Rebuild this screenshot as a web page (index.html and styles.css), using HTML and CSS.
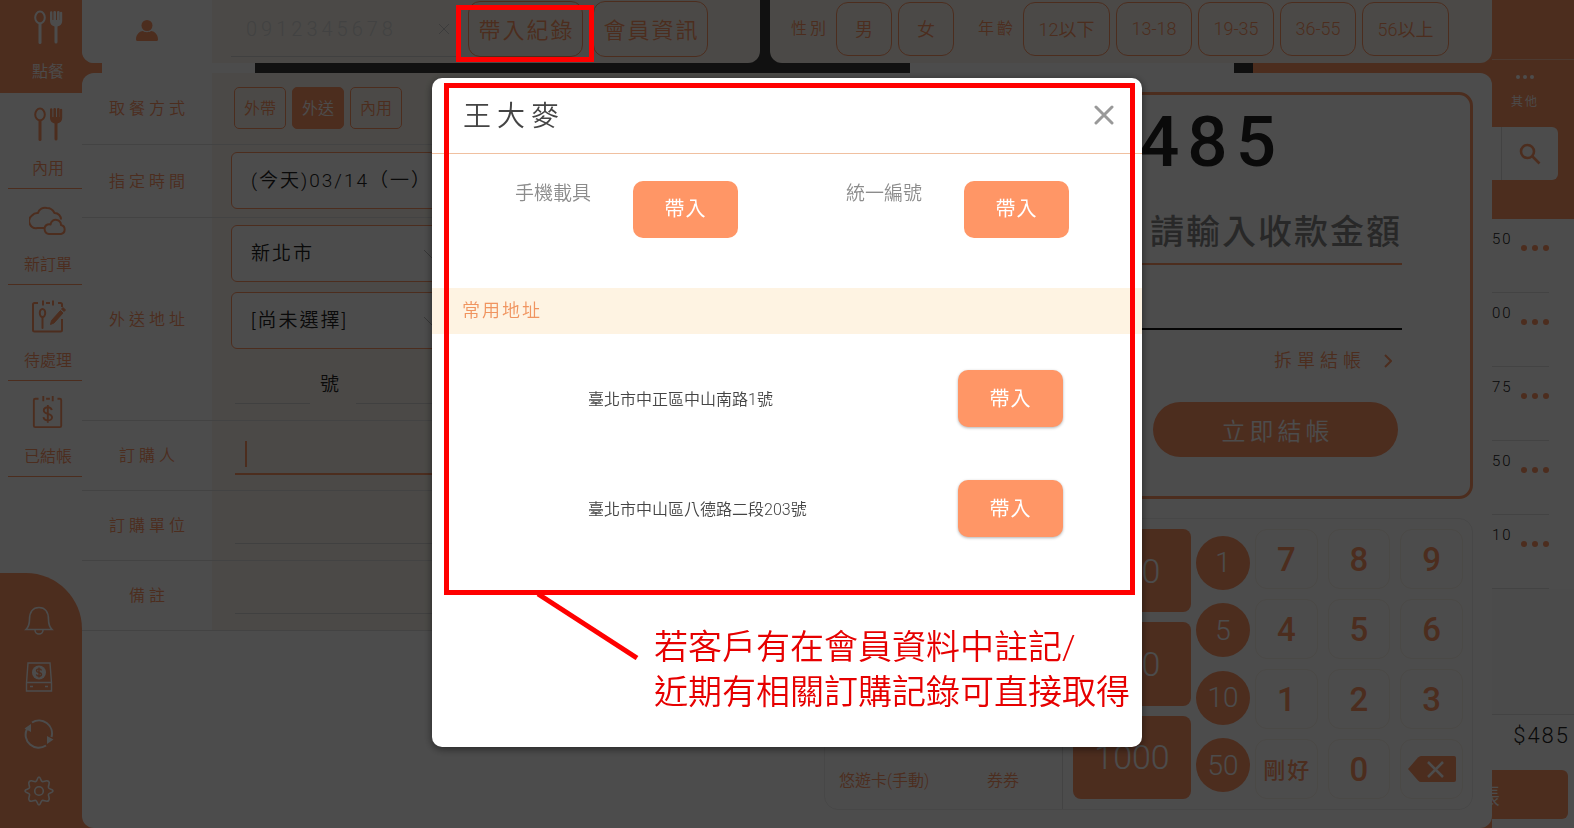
FILE: index.html
```html
<!DOCTYPE html>
<html lang="zh-Hant">
<head>
<meta charset="utf-8">
<meta name="viewport" content="width=device-width, initial-scale=1">
<title>點餐 - 會員紀錄</title>
<link rel="stylesheet" href="styles.css">
</head>
<body>
<svg class="defs" aria-hidden="true">
  <symbol id="cutlery" viewBox="0 0 30 34">
    <ellipse cx="7" cy="7.500" rx="4.800" ry="6" fill="none" stroke="currentColor" stroke-width="2"/>
    <path d="M7 14v18.500" stroke="currentColor" stroke-width="3" stroke-linecap="round"/>
    <path d="M17 2.500a1.200 1.200 0 0 1 2.400 0V10h1V2a1.200 1.200 0 0 1 1.300-1 1.200 1.200 0 0 1 1.300 1v8h1V2a1.200 1.200 0 0 1 1.300-1 1.200 1.200 0 0 1 1.300 1v8h.300V2.500a1.200 1.200 0 0 1 2.300 0V11c0 3-2 5-4.700 5.500V32a1.500 1.500 0 0 1-3 0V16.500C19 16 17 14 17 11z" fill="currentColor"/>
  </symbol>
</svg>
<div class="app">
  <nav class="side">
    <a class="side-item active" href="#order"><svg class="i-cut"><use href="#cutlery"/></svg><span>點餐</span></a>
    <a class="side-item" href="#dine"><svg class="i-cut"><use href="#cutlery"/></svg><span>內用</span></a>
    <a class="side-item" href="#new"><svg class="i-big" viewBox="0 0 38 34" fill="none" stroke="currentColor" stroke-width="2" stroke-linejoin="round"><path d="M16 25H8.500A7 7 0 0 1 3 12.500 7 7 0 0 1 9 10C10 6 14 4 18 5c3 0 6 2 7.500 5 4 0 6.500 3 6.500 6.500"/><path d="M20 31a5 5 0 0 1-1.500-9.500c1.500-.500 2-.500 3 0C22 18 25 16 28 17c2.500.700 4 2.500 4 5a4.600 4.600 0 0 1 0 9z"/></svg><span>新訂單</span></a>
    <a class="side-item" href="#pending"><svg class="i-big" viewBox="0 0 38 34" fill="none" stroke="currentColor" stroke-width="2"><path d="M4 31q0 1.500 1.500 1.500h26Q33 32.500 33 31V20M9 4H5.500Q4 4 4 5.500V31M17 4h4M29 4h2.500Q33 4 33 5.500V8M14 1.500v5M24 1.500v5"/><ellipse cx="13.500" cy="14" rx="2.700" ry="4"/><path d="M13.500 18v11" stroke-linecap="round"/><path d="M21.500 25.500l1-4 9-10 2.500 2.500-9 10zM32.500 10l1.500-1.500 2.500 2.500L35 12.500z" fill="currentColor" stroke-width="1"/></svg><span>待處理</span></a>
    <a class="side-item" href="#paid"><svg class="i-big" viewBox="0 0 38 36" fill="none" stroke="currentColor" stroke-width="2"><path d="M9 4H5.500Q4 4 4 5.500v27Q4 34 5.500 34h26q1.500 0 1.500-1.500v-27Q33 4 31.500 4H29M17 4h4M14 1v5.500M24 1v5.500"/><path d="M23 16c-.500-2-2-3-4.200-3-2.500 0-4.300 1.300-4.300 3.300 0 4.700 8.800 2.500 8.800 7.200 0 2-2 3.500-4.500 3.500s-4.300-1.300-4.600-3.500M18.800 10.500v19"/></svg><span>已結帳</span></a>
    <div class="side-tools">
      <button aria-label="通知"><svg viewBox="0 0 30 30" fill="none" stroke="currentColor" stroke-width="1.600"><path d="M2 24.500c3-3 3.500-6 3.500-10C5.500 7 9 2.500 15 2.500S24.500 7 24.500 14.500c0 4 .500 7 3.500 10zM11 25a4 4 0 0 0 8 0"/></svg></button>
      <button aria-label="錢箱"><svg viewBox="0 0 30 30" fill="none" stroke="currentColor" stroke-width="1.400"><path d="M4 1h22l1.500 20v8h-25v-8zM2.500 20.500h25M6 24.500h3M21 24.500h3"/><circle cx="15" cy="10.500" r="7" fill="currentColor" stroke="none"/><path class="coin" d="M17.500 8.500c-.300-1-1.200-1.600-2.500-1.600s-2.500.700-2.500 1.800c0 2.600 5 1 5 3.600 0 1.100-1.100 1.900-2.500 1.900s-2.400-.700-2.600-1.800M15 5.500v10"/></svg></button>
      <button aria-label="同步"><svg viewBox="0 0 30 30" fill="none" stroke="currentColor" stroke-width="2"><path d="M8 3.500A13 13 0 0 1 27.500 18M22 26.500A13 13 0 0 1 3 10"/><path d="M.500 9.500L7 5v8zM29.500 20.500L23 17v8z" fill="currentColor" stroke="none"/></svg></button>
      <button aria-label="設定"><svg viewBox="0 0 30 30" fill="none" stroke="currentColor" stroke-width="1.600" stroke-linejoin="round"><path d="M15 1c1.800 0 1.500 3.800 3.200 4.500S22.500 3.400 24.600 5.400s-.900 3.600-.100 6.400c.700 1.700 4.500 1.400 4.500 3.200s-3.800 1.500-4.500 3.200 2.100 4.300.100 6.400-4.700-.800-6.400-.100S16.800 29 15 29s-1.500-3.800-3.200-4.500-4.300 2.100-6.400.100.800-4.700.100-6.400S1 16.800 1 15s3.800-1.500 4.500-3.200-2.100-4.300-.100-6.400 4.700.800 6.400.100S13.200 1 15 1z"/><circle cx="15" cy="15" r="4.300"/></svg></button>
    </div>
  </nav>

  <main class="center">
    <header class="top">
      <section class="card member">
        <div class="member-icon"><svg viewBox="0 0 22 21" fill="currentColor"><circle cx="11" cy="5.500" r="5.500"/><path d="M0 19.500C0 14 4 11 7 11c1.500 1.600 6.500 1.600 8 0 3 0 7 3 7 8.500q0 1.500-1.500 1.500h-19Q0 21 0 19.500z"/></svg></div>
        <div class="member-body">
          <div class="phone"><input type="text" aria-label="會員電話" placeholder="0912345678"><button aria-label="清除"><svg viewBox="0 0 12 12" stroke="currentColor"><path d="M1 1l10 10M11 1L1 11"/></svg></button></div>
          <button class="btn-line lg">帶入紀錄</button><button class="btn-line lg">會員資訊</button>
        </div>
      </section>
      <section class="card guest">
        <span class="guest-label">性別</span>
        <button class="btn-line sq">男</button><button class="btn-line sq">女</button>
        <span class="guest-label age">年齡</span>
        <button class="btn-line wide">12以下</button><button class="btn-line">13-18</button><button class="btn-line">19-35</button><button class="btn-line">36-55</button><button class="btn-line wide">56以上</button>
      </section>
    </header>

    <section class="panel">
      <form class="form">
        <div class="row"><span class="lab">取餐方式</span><div class="val modes"><button type="button">外帶</button><button type="button" class="on">外送</button><button type="button">內用</button></div></div>
        <div class="row"><label class="lab" for="time">指定時間</label><div class="val boxed"><select id="time" class="long"><option>(今天)03/14（一）</option></select></div></div>
        <div class="row"><label class="lab" for="city">外送地址</label><div class="val boxed">
          <select id="city"><option>新北市</option></select>
          <select aria-label="行政區"><option>[尚未選擇]</option></select>
          <div class="addr"><input type="text" id="no" aria-label="號碼"><label for="no">號</label><input type="text" aria-label="樓層"></div>
        </div></div>
        <div class="row"><label class="lab" for="who">訂購人</label><div class="val"><div class="line focus"><i class="caret"></i><input type="text" id="who"></div></div></div>
        <div class="row"><label class="lab" for="org">訂購單位</label><div class="val"><div class="line"><input type="text" id="org"></div></div></div>
        <div class="row"><label class="lab" for="memo">備註</label><div class="val"><div class="line"><input type="text" id="memo"></div></div></div>
      </form>

      <div class="pay">
        <section class="due">
          <strong>485</strong>
          <input class="cash" type="text" aria-label="收款金額" placeholder="請輸入收款金額">
          <div class="change"></div>
          <a class="split" href="#split">拆單結帳<svg viewBox="0 0 8 14" fill="none" stroke="currentColor" stroke-width="2"><path d="M1 1l6 6-6 6"/></svg></a>
          <button class="checkout">立即結帳</button>
        </section>
        <section class="pad">
          <div class="methods"><button>悠遊卡(手動)</button><button>券券</button></div>
          <div class="bills"><button>100</button><button>500</button><button>1000</button></div>
          <div class="coins"><button>1</button><button>5</button><button>10</button><button>50</button></div>
          <div class="keys">
            <button>7</button><button>8</button><button>9</button>
            <button>4</button><button>5</button><button>6</button>
            <button>1</button><button>2</button><button>3</button>
            <button class="exact">剛好</button><button>0</button>
            <button aria-label="刪除"><svg viewBox="0 0 48 26"><path d="M0 13L10 1.500Q11.500 0 13 0h33q2 0 2 2v22q0 2-2 2H13q-1.500 0-3-1.500z" fill="currentColor"/><path d="M20 6l15 15M35 6L20 21" stroke="#fff" stroke-width="2.500"/></svg></button>
          </div>
        </section>
      </div>
    </section>
  </main>

  <aside class="rail">
    <div class="rail-top">
      <div class="rail-gap"></div>
      <button class="other"><svg viewBox="0 0 18 4" fill="currentColor"><circle cx="2" cy="2" r="2"/><circle cx="9" cy="2" r="2"/><circle cx="16" cy="2" r="2"/></svg>其他</button>
      <button class="search" aria-label="搜尋"><svg viewBox="0 0 22 22" fill="none" stroke="currentColor" stroke-width="2.600"><circle cx="8.500" cy="8.500" r="6.500"/><path d="M13 13l7.500 7.500"/></svg></button>
    </div>
    <ul class="items">
      <li>50<button aria-label="更多"><i></i><i></i><i></i></button></li>
      <li>00<button aria-label="更多"><i></i><i></i><i></i></button></li>
      <li>75<button aria-label="更多"><i></i><i></i><i></i></button></li>
      <li>50<button aria-label="更多"><i></i><i></i><i></i></button></li>
      <li>10<button aria-label="更多"><i></i><i></i><i></i></button></li>
    </ul>
    <div class="sum">
      <span>$485</span>
      <button>結帳</button>
    </div>
  </aside>
</div>

<div class="overlay">
  <div class="dialog" role="dialog" aria-modal="true" aria-labelledby="dlg-title">
    <header class="dlg-head">
      <h1 id="dlg-title">王大麥</h1>
      <button class="close" aria-label="關閉"><svg viewBox="0 0 20 20" stroke="currentColor" stroke-width="3" stroke-linecap="round"><path d="M2 2l16 16M18 2L2 18"/></svg></button>
    </header>
    <div class="fields">
      <div class="field"><span>手機載具</span><button class="fill">帶入</button></div>
      <div class="field"><span>統一編號</span><button class="fill">帶入</button></div>
    </div>
    <h2>常用地址</h2>
    <ul class="places">
      <li><span>臺北市中正區中山南路1號</span><button class="fill">帶入</button></li>
      <li><span>臺北市中山區八德路二段203號</span><button class="fill">帶入</button></li>
    </ul>
    <p class="remark">若客戶有在會員資料中註記/<br>近期有相關訂購記錄可直接取得</p>
    <div class="frame frame-dialog"></div>
    <svg class="pointer" viewBox="0 0 104 68"><path d="M2 2l99 64" stroke="#f00" stroke-width="5"/></svg>
  </div>
</div>
<div class="frame frame-button"></div>
</body>
</html>
```

FILE: styles.css
```css
:root {
  --orange: #ff9666;
  --cream: #fbf6ee;
  --line: #e2e2e2;
  --red: #ff0000;
}

* { box-sizing: border-box; }

body {
  margin: 0;
  font-family: Roboto, "Noto Sans CJK TC", sans-serif;
  font-size: 16px;
  font-weight: 350;
  color: #222;
  background: #fff;
}

button, input, select {
  font: inherit;
  color: inherit;
  letter-spacing: inherit;
  margin: 0;
  padding: 0;
  border: 0;
  border-radius: 0;
  background: none;
  outline: none;
}

a { color: inherit; text-decoration: none; }
ul { list-style: none; margin: 0; padding: 0; }
svg { display: block; }
.defs { position: absolute; width: 0; height: 0; }

.app {
  display: flex;
  height: 100vh;
  min-height: 828px;
  overflow: hidden;
}

/* Left navigation */
.side {
  flex: 0 0 82px;
  display: flex;
  flex-direction: column;
  color: var(--orange);
}

.side-item {
  height: 96px;
  margin-left: 8px;
  padding: 14px 0 0 6px;
  display: flex;
  flex-direction: column;
  align-items: center;
  gap: 16px;
  border-bottom: 1px solid var(--orange);
  line-height: 23px;
}

.side-item.active {
  margin: 0;
  height: 93px;
  padding: 10px 0 0 14px;
  background: var(--orange);
  color: #fff;
}

.i-cut { width: 30px; height: 34px; }
.i-big { width: 38px; height: 34px; }

.side-tools {
  margin-top: auto;
  height: 255px;
  padding: 32px 4px 0 0;
  display: flex;
  flex-direction: column;
  align-items: center;
  gap: 27px;
  background: var(--orange);
  border-top-right-radius: 56px;
  color: #fff;
}

.side-tools svg { width: 30px; height: 30px; }
.coin { stroke: var(--orange); }

/* Middle area */
.center {
  flex: 1;
  min-width: 0;
  display: flex;
  flex-direction: column;
  gap: 10px;
  background: linear-gradient(90deg, var(--orange) 20px, #fff 20px, #fff 173px, #3b3b3b 173px, #3b3b3b 828px, #fff 828px, #fff calc(100% - 258px), #333 calc(100% - 258px), #333 calc(100% - 239px), var(--orange) calc(100% - 239px));
}

.top {
  display: flex;
  gap: 10px;
  height: 63px;
}

.card {
  background: var(--cream);
  border-radius: 0 0 12px 12px;
  overflow: hidden;
  display: flex;
  color: var(--orange);
}

.member { flex: 0 0 678px; }

.member-icon {
  flex: 0 0 130px;
  padding-top: 20px;
  background: #fff;
}

.member-icon svg { width: 22px; height: 21px; margin: 0 auto; }

.member-body {
  display: flex;
  align-items: flex-start;
  gap: 10px;
  padding: 1px 0 0 19px;
}

.phone {
  width: 227px;
  height: 56px;
  padding: 0 8px 0 15px;
  display: flex;
  align-items: center;
  border-bottom: 1px solid #d8d8d8;
  font-size: 20px;
  letter-spacing: 4px;
  color: #c8c8c8;
}

.phone input { flex: 1; min-width: 0; }
.phone input::placeholder { color: #dcdcdc; opacity: 1; }
.phone svg { width: 12px; height: 12px; }

.btn-line {
  flex: none;
  width: 76px;
  height: 54px;
  padding-bottom: 2px;
  border: 1px solid var(--orange);
  border-radius: 12px;
  font-size: 18px;
}

.btn-line.lg {
  width: 115px;
  height: 56px;
  font-size: 22px;
  letter-spacing: 2px;
  text-indent: 2px;
}

.btn-line.sq { width: 56px; }
.btn-line.wide { width: 87px; }

.guest {
  flex: 1;
  gap: 6px;
  padding: 2px 0 0 21px;
}

.guest-label {
  padding-right: 1px;
  line-height: 54px;
  letter-spacing: 3px;
}

.guest-label.age { padding-left: 18px; }

.panel {
  flex: 1;
  display: flex;
  gap: 14px;
  padding-right: 19px;
  background: #fff;
  border-radius: 12px;
  overflow: hidden;
}

/* Order form */
.form { flex: 1; min-width: 0; }

.row {
  display: flex;
  min-height: 70px;
  border-bottom: 1px solid var(--line);
}

.row:nth-child(1) { min-height: 72px; }
.row:nth-child(2) { height: 73px; }

.lab {
  flex: 0 0 130px;
  display: flex;
  align-items: center;
  justify-content: center;
  padding-bottom: 3px;
  letter-spacing: 4px;
  text-indent: 4px;
  color: var(--orange);
}

.val {
  flex: 1;
  background: var(--cream);
  padding-left: 23px;
}

.modes { display: flex; gap: 6px; padding: 14px 0 0 22px; }

.modes button {
  width: 52px;
  height: 42px;
  padding-bottom: 2px;
  border: 1px solid var(--orange);
  border-radius: 5px;
  color: var(--orange);
}

.modes .on { background: var(--orange); color: #fff; }

.boxed {
  display: flex;
  flex-direction: column;
  gap: 10px;
  padding: 7px 0 0 19px;
  font-size: 19px;
  letter-spacing: 2px;
}

.boxed select {
  appearance: none;
  width: 216px;
  height: 57px;
  padding-left: 19px;
  border: 1px solid var(--orange);
  border-radius: 6px;
  background: #fff linear-gradient(45deg, transparent 46%, #bbb 46%, #bbb 54%, transparent 54%) no-repeat right 14px center / 8px 8px;
}

.boxed select.long { width: 400px; }

.addr {
  display: flex;
  align-items: flex-end;
  gap: 10px;
  padding: 0 0 16px 4px;
  line-height: 38px;
}

.addr input { width: 75px; height: 45px; border-bottom: 1px solid #d8d8d8; }
.addr label { width: 26px; }
.addr label + input { width: 90px; }

.line {
  height: 53px;
  display: flex;
  align-items: center;
  border-bottom: 1px solid #d8d8d8;
}

.line input { flex: 1; }
.line.focus { height: 54px; border-bottom: 2px solid var(--orange); }
.caret { width: 2px; height: 26px; margin: 14px 0 0 10px; background: var(--orange); }

/* Payment */
.pay {
  flex: 0 0 649px;
  padding: 19px 0 18px;
  display: flex;
  flex-direction: column;
  gap: 19px;
}

.due {
  height: 407px;
  padding: 12px 68px 0;
  border: 3px solid var(--orange);
  border-radius: 14px;
  display: flex;
  flex-direction: column;
  align-items: flex-end;
}

.due strong {
  padding-right: 118px;
  font-size: 71px;
  line-height: 70px;
  font-weight: 500;
  letter-spacing: 8px;
}

.cash {
  width: 100%;
  height: 64px;
  margin-top: 24px;
  text-align: right;
  font-size: 34px;
  font-weight: 500;
  letter-spacing: 2px;
  border-bottom: 2px solid var(--orange);
}

.cash::placeholder { color: #888; opacity: 1; }
.change { width: 100%; height: 65px; border-bottom: 2px solid #111; }

.split {
  display: flex;
  align-items: center;
  gap: 18px;
  padding: 17px 10px 0 0;
  font-size: 18px;
  line-height: 28px;
  letter-spacing: 5px;
  color: var(--orange);
}

.split svg { width: 8px; height: 14px; }

.checkout {
  width: 245px;
  height: 55px;
  margin: 27px 4px 0 0;
  border-radius: 28px;
  background: var(--orange);
  color: #fff;
  font-size: 24px;
  letter-spacing: 4px;
  text-indent: 4px;
}

.pad {
  flex: 1;
  display: flex;
  border: 1px solid #eeeeee;
  border-radius: 14px;
  padding: 10px 9px 10px 0;
}

.methods {
  flex: 1;
  display: flex;
  align-items: flex-end;
  justify-content: space-between;
  margin: -10px 0;
  padding: 0 43px 18px 14px;
  border-right: 1px solid var(--line);
  color: var(--orange);
}

.bills {
  width: 118px;
  margin: 0 5px 0 10px;
  display: grid;
  gap: 10px;
}

.bills button {
  border-radius: 8px;
  background: var(--orange);
  color: #fff;
  font-size: 34px;
  font-weight: 300;
}

.coins {
  width: 54px;
  margin-right: 5px;
  display: flex;
  flex-direction: column;
  justify-content: space-around;
}

.coins button {
  height: 54px;
  border-radius: 50%;
  background: var(--orange);
  color: #fff;
  font-size: 28px;
  font-weight: 300;
}

.keys {
  width: 208px;
  display: grid;
  grid-template-columns: repeat(3, 1fr);
  gap: 10px;
}

.keys button {
  border: 1px solid #f8f3ea;
  border-radius: 12px;
  color: var(--orange);
  font-size: 33px;
  font-weight: 500;
}

.keys .exact { padding-bottom: 3px; font-size: 22px; letter-spacing: 2px; text-indent: 2px; }
.keys svg { width: 48px; height: 26px; margin: 0 auto; }

/* Right rail */
.rail {
  flex: 0 0 82px;
  display: flex;
  flex-direction: column;
  overflow: hidden;
  background: #fafafa;
}

.rail-top { height: 219px; background: var(--orange); color: #fff; }
.rail-gap { height: 60px; border-bottom: 1px solid #ffc3a5; }

.other {
  width: 66px;
  height: 67px;
  padding-bottom: 4px;
  font-size: 12px;
  letter-spacing: 2px;
}

.other svg { width: 18px; height: 4px; margin: 0 auto 13px; }

.search {
  display: flex;
  align-items: center;
  justify-content: center;
  width: 66px;
  height: 53px;
  padding-left: 10px;
  border-radius: 0 6px 6px 0;
  background: linear-gradient(90deg, transparent 9px, #ddd 9px, #ddd 10px, transparent 10px) #fff;
  color: var(--orange);
}

.search svg { width: 22px; height: 22px; }

.items { padding-right: 25px; background: #fff; }

.items li {
  height: 74px;
  padding-top: 10px;
  display: flex;
  justify-content: space-between;
  align-items: flex-start;
  border-bottom: 1px solid var(--line);
  font-size: 15px;
  line-height: 20px;
  letter-spacing: 2px;
}

.items button { display: flex; gap: 5px; padding-top: 16px; }
.items i { width: 6px; height: 6px; border-radius: 50%; background: var(--orange); }

.sum {
  margin-top: auto;
  height: 114px;
  padding: 7px 4px 9px 0;
  border-top: 1px solid var(--line);
  background: #fff;
  display: flex;
  flex-direction: column;
  justify-content: space-between;
  align-items: flex-end;
  font-size: 22px;
  letter-spacing: 2px;
}

.sum span { line-height: 28px; }

.sum button {
  width: 180px;
  height: 49px;
  margin-right: 2px;
  padding-bottom: 2px;
  border-radius: 6px;
  background: var(--orange);
  color: #fff;
}

/* Dialog */
.overlay {
  position: fixed;
  inset: 0;
  padding-bottom: 3px;
  display: flex;
  align-items: center;
  justify-content: center;
  background: rgba(0, 0, 0, 0.7);
}

.dialog {
  position: relative;
  width: 710px;
  max-width: 100%;
  min-height: 669px;
  background: #fff;
  border-radius: 10px;
  box-shadow: 0 2px 8px rgba(0, 0, 0, 0.5);
}

.dlg-head {
  height: 76px;
  padding: 0 28px 3px 31px;
  display: flex;
  align-items: center;
  justify-content: space-between;
  border-bottom: 1px solid #f0c0a0;
}

.dlg-head h1 {
  margin: 0;
  font-size: 28px;
  font-weight: 350;
  letter-spacing: 6px;
  color: #444;
}

.close { padding-top: 2px; color: #999; }
.close svg { width: 20px; height: 20px; }

.fields {
  height: 134px;
  padding: 27px 0 0 83px;
  display: flex;
  gap: 108px;
}

.field {
  display: flex;
  gap: 42px;
  font-size: 19px;
  line-height: 26px;
  color: #8c8c8c;
}

.fill {
  width: 105px;
  height: 57px;
  padding-bottom: 2px;
  border-radius: 10px;
  background: var(--orange);
  color: #fff;
  font-size: 20px;
  font-weight: 400;
  letter-spacing: 1px;
}

.dialog h2 {
  margin: 0;
  padding-left: 30px;
  background: #fef3e2;
  color: #f0945f;
  font-size: 18px;
  font-weight: 350;
  line-height: 46px;
  letter-spacing: 2px;
}

.places {
  padding: 36px 79px 0 156px;
  display: grid;
  gap: 53px;
  color: #444;
}

.places li {
  display: flex;
  align-items: center;
  justify-content: space-between;
}

.places span { padding-bottom: 2px; }
.places .fill { box-shadow: 0 1px 3px rgba(0, 0, 0, 0.3); }

.remark {
  margin: 88px 0 0;
  padding-left: 222px;
  color: #e60000;
  font-size: 34px;
  line-height: 45px;
  white-space: nowrap;
}

/* Red call-outs drawn over the page */
.frame {
  position: absolute;
  border: 5px solid var(--red);
  pointer-events: none;
}

.frame-dialog { left: 12px; top: 5px; width: 691px; height: 512px; }
.frame-button { left: 456px; top: 5px; width: 138px; height: 57px; }

.pointer {
  position: absolute;
  left: 104px;
  top: 514px;
  width: 104px;
  height: 68px;
}
```
